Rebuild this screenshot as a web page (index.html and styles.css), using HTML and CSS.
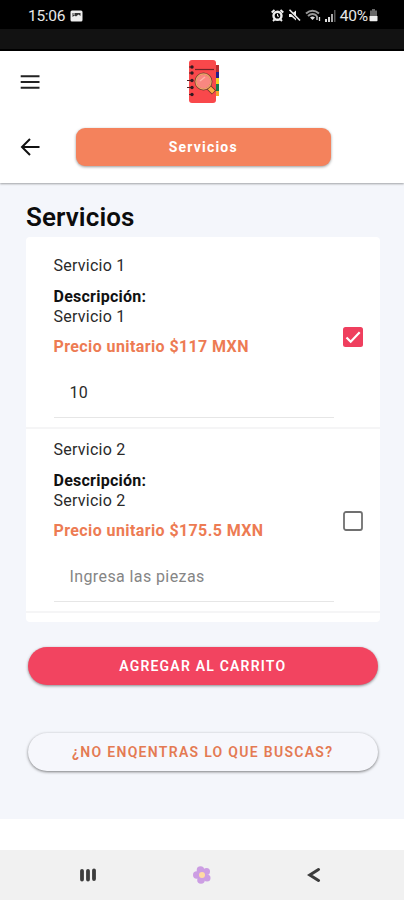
FILE: index.html
```html
<!DOCTYPE html>
<html lang="es">
<head>
<meta charset="utf-8">
<title>Servicios</title>
<link rel="stylesheet" href="styles.css">
</head>
<body>
<div class="status">
  <div class="status-left">
    <span class="clock">15:06</span>
    <svg width="13" height="12" viewBox="0 0 13 12"><rect x=".5" y=".5" width="12" height="11" rx="1.5" fill="#eee"/><path d="M2.500 3h8v3L8.500 4.500 6 6.500 4.500 5.500 2.500 7z" fill="#333"/><path d="M3 3.500h2v1H3z" fill="#eee"/></svg>
  </div>
  <div class="status-right">
    <svg width="13" height="13" viewBox="0 0 13 13" fill="none" stroke="#eee"><circle cx="6.500" cy="6.800" r="4" stroke-width="2.400"/><path d="M.7 3.500 3.500 1M12.300 3.500 9.500 1M2 12l1.500-1.500M11 12l-1.500-1.500" stroke-width="1.900"/><path d="M6.500 4.800v2.400h1.500"/></svg>
    <svg width="13" height="13" viewBox="0 0 13 13"><path d="M1 5h2.500L8 1.500v10L4 8H1z" fill="#eee"/><path d="M.5 1 12 12" stroke="#000" stroke-width="2.200"/><path d="M1.500.8 12 11.500" stroke="#eee" stroke-width="1.600"/></svg>
    <svg class="wifi" width="16" height="13" viewBox="0 0 16 13" fill="none"><path d="M1 4.500Q7.500-1 14 4.500M3 7Q7.500 3 12 7" stroke="#999" stroke-width="2"/><path d="M5 8.500Q7.500 6.500 10 8.500L7.500 11z" fill="#ddd"/><path d="M12 11V7M14.500 8v4" stroke="#ddd" stroke-width="1.300"/></svg>
    <svg width="11" height="12" viewBox="0 0 11 12"><path d="M0 9h2v3H0zM3 7h2v5H3z" fill="#ddd"/><path d="M6 4h2v8H6z" fill="#aaa"/><path d="M9 0h1.500v12H9z" fill="#555"/></svg>
    <span class="battery-text">40%</span>
    <svg width="9" height="13" viewBox="0 0 9 13"><path d="M3 0h3v1.500h2V7H1V1.500h2z" fill="#666"/><path d="M.5 7h8v4.500q0 .8-.8.800H1.300q-.8 0-.8-.8z" fill="#eee"/></svg>
  </div>
</div>
<div class="strip"></div>
<header class="header">
  <div class="bar">
    <svg class="menu" width="20" height="16" viewBox="0 0 20 16"><path d="M.7 2.300h18.800M.7 8h18.800M.7 13.700h18.800" stroke="#222" stroke-width="1.900"/></svg>
    <svg class="logo" width="34" height="46" viewBox="0 0 34 46">
      <path d="M27 6h5v8h-5z" fill="#b52b30"/><path d="M27 13h5v6h-5z" fill="#25208c"/><path d="M27 19h5v6h-5z" fill="#f1d525"/><path d="M27 25h5v7h-5z" fill="#147d4b"/><path d="M27 32h5v5h-5z" fill="#f4a52c"/>
      <rect x="2" y="1" width="27" height="43" rx="3" fill="#f9484b"/>
      <path d="M8 10.500h19" stroke="#702529" stroke-width="1.200"/>
      <path d="M0 21.500h5M0 28.500h5M2 8h3M2 14h3M2 35.500h3" stroke="#542326" stroke-width="1"/>
      <g fill="#301a20"><circle cx="5" cy="8" r="1.700"/><circle cx="5" cy="14" r="1.700"/><circle cx="5" cy="21.500" r="1.700"/><circle cx="5" cy="28.500" r="1.700"/><circle cx="5" cy="35.500" r="1.700"/></g>
      <path d="m21.500 28 5.500 5.500" stroke="#6e382c" stroke-width="6"/><path d="m22 28.500 4.500 4.500" stroke="#ffad42" stroke-width="4"/>
      <circle cx="16.500" cy="22.500" r="8" fill="#f98780" stroke="#713e31" stroke-width="2"/><circle cx="16.500" cy="22.500" r="7.500" fill="none" stroke="#eda16a" stroke-width="1.500"/><path d="m13 22 5-4" stroke="#ffb3a8" stroke-width="1.500"/>
    </svg>
  </div>
  <div class="title-row">
    <svg class="back" width="20" height="18" viewBox="0 0 20 18" fill="none" stroke="#111" stroke-width="2"><path d="M19.500 9H2M10 1 2 9l8 8"/></svg>
    <div class="tab">Servicios</div>
  </div>
</header>
<main class="content">
  <h1>Servicios</h1>
  <div class="list">
    <div class="item">
      <div class="info">
        <div class="name">Servicio 1</div>
        <div class="desc"><b>Descripción:</b><br>Servicio 1</div>
        <div class="price">Precio unitario $117 MXN</div>
        <div class="field">10</div>
      </div>
      <svg class="check" width="20" height="20" viewBox="0 0 20 20"><rect width="20" height="20" rx="2.500" fill="#ef3f5e"/><path d="m3.500 10.500 4.200 4.200 9-9.500" fill="none" stroke="#fff" stroke-width="2.200"/></svg>
    </div>
    <div class="item">
      <div class="info">
        <div class="name">Servicio 2</div>
        <div class="desc"><b>Descripción:</b><br>Servicio 2</div>
        <div class="price">Precio unitario $175.5 MXN</div>
        <div class="field empty">Ingresa las piezas</div>
      </div>
      <svg class="check" width="20" height="20" viewBox="0 0 20 20"><rect x="1" y="1" width="18" height="18" rx="2" fill="#fff" stroke="#707070" stroke-width="1.800"/></svg>
    </div>
  </div>
  <div class="btn primary">AGREGAR AL CARRITO</div>
  <div class="btn ghost">¿NO ENQENTRAS LO QUE BUSCAS?</div>
</main>
<div class="gap"></div>
<nav class="nav">
  <svg width="18" height="14" viewBox="0 0 18 14"><path d="M3 2.800v8.700M9 2.800v8.700M15 2.300v8.700" stroke="#3c3c3c" stroke-width="3.800" stroke-linecap="round"/></svg>
  <svg width="20" height="20" viewBox="0 0 20 20"><g fill="#cc9ee3"><circle cx="8.500" cy="5" r="3.800"/><circle cx="14.500" cy="6.500" r="3.500"/><circle cx="15" cy="13" r="3.500"/><circle cx="9" cy="15" r="3.800"/><circle cx="4.700" cy="10" r="3.700"/><circle cx="10" cy="10" r="5"/></g><circle cx="10" cy="10" r="3" fill="#ffdba4"/></svg>
  <svg width="14" height="16" viewBox="0 0 14 16"><path d="M11.500 2.500 2.800 8l8.700 5.500" fill="none" stroke="#3c3c3c" stroke-width="3" stroke-linecap="round"/></svg>
</nav>
</body>
</html>
```

FILE: styles.css
```css
* { box-sizing: border-box; }
body {
  margin: 0;
  height: 900px;
  display: flex;
  flex-direction: column;
  overflow: hidden;
  background: #fff;
  color: #2a2a2a;
  font: 16px/20px Roboto, "Liberation Sans", sans-serif;
}
svg { display: block; flex: none; }
.status {
  height: 29px;
  padding: 2px 26px 0 28px;
  display: flex;
  justify-content: space-between;
  align-items: center;
  background: #000;
  color: #e8e8e8;
}
.status-left, .status-right { display: flex; align-items: center; }
.status-left { gap: 5px; }
.status-right { gap: 4px; }
.clock { font-size: 15.5px; letter-spacing: -0.3px; }
.battery-text { font-size: 15.5px; letter-spacing: -0.2px; margin-right: -3px; }
.strip { height: 22px; background: #121212; border-bottom: 2px solid #000; }
.header {
  position: relative;
  height: 132px;
  background: #fff;
  box-shadow: 0 1px 2px rgba(0, 0, 0, .35);
}
.bar { height: 62px; padding: 0 20px; display: grid; grid-template-columns: 20px 1fr 20px; align-items: center; }
.logo { justify-self: center; margin-left: 3px; }
.title-row { display: flex; align-items: center; gap: 35.5px; padding: 15px 73px 0 20px; }
.tab {
  flex: 1;
  height: 38px;
  border-radius: 9px;
  background: #f4825c;
  box-shadow: 0 1px 3px rgba(0, 0, 0, .4);
  color: #fff;
  font-size: 14px;
  font-weight: 700;
  letter-spacing: 1.2px;
  line-height: 38px;
  text-align: center;
}
.content { height: 636px; padding: 20px 24.5px 0 26px; background: #f4f6fb; }
h1 { margin: 0; font-size: 26px; line-height: 28px; font-weight: 600; color: #0c0c0c; letter-spacing: .1px; padding-bottom: 6px; }
.list { height: 385px; padding-top: 8px; background: #fff; border-radius: 4px; }
.item { height: 184px; padding: 11px 16.5px 0 27.5px; display: flex; justify-content: space-between; border-bottom: 2px solid #f5f5f6; }
.info { width: 280px; letter-spacing: .25px; }
.desc { margin: 10.5px 0; }
.desc b { font-weight: 700; color: #111; letter-spacing: .25px; }
.price { font-weight: 700; color: #ed7b53; letter-spacing: .4px; }
.field { height: 61px; padding: 26px 16px 0; border-bottom: 1px solid #e6e6e6; }
.empty { color: #858585; letter-spacing: .4px; }
.check { margin-top: 71px; }
.btn {
  height: 38px;
  margin: 0 2px;
  border-radius: 19px;
  line-height: 38px;
  font-size: 14px;
  font-weight: 600;
  letter-spacing: 1.2px;
  text-align: center;
}
.primary { margin-top: 25px; background: #f24460; color: #fff; box-shadow: 0 1px 3px rgba(0, 0, 0, .45); }
.ghost { margin-top: 48px; background: #f6f7fc; color: #e47a53; letter-spacing: 1.3px; box-shadow: 0 1px 3px rgba(0, 0, 0, .5); }
.gap { height: 31px; }
.nav { height: 50px; padding: 0 83px 0 79px; background: #f1f1f1; display: flex; align-items: center; justify-content: space-between; }
```
